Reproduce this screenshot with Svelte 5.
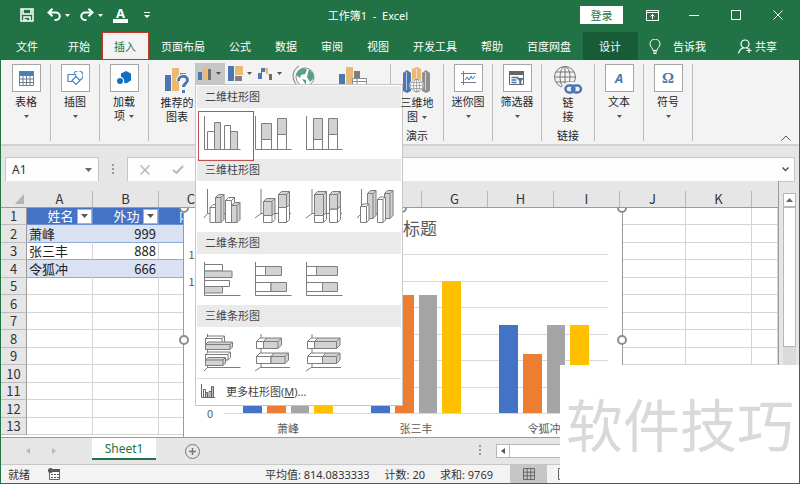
<script>
  const tabs = ['文件', '开始', '插入', '页面布局', '公式', '数据', '审阅', '视图', '开发工具', '帮助', '百度网盘', '设计'];
  const columns = ['A', 'B', 'C', 'D', 'E', 'F', 'G', 'H', 'I', 'J', 'K', ''];
  const people = [
    ['萧峰', 999],
    ['张三丰', 888],
    ['令狐冲', 666],
  ];
  const emptyRows = [5, 6, 7, 8, 9, 10, 11, 12, 13];
  const series = [
    { name: '萧峰', values: [999, 888, 777, 888] },
    { name: '张三丰', values: [888, 888, 888, 999] },
    { name: '令狐冲', values: [666, 444, 666, 666] },
  ];
  const ticks = [1200, 1000, 800, 600, 400, 200, 0];

  const G = '#d2d2d2';
  const W = '#ffffff';
  // Flat icons list rectangles as [x, y, width, height, fill];
  // solid icons add the depth of the box as a last number.
  const gallery = [
    {
      title: '二维柱形图',
      items: [
        { name: '簇状柱形图', axis: 'M7.5 8V41.5H43.5', flat: [[10.5, 23.5, 7, 18, W], [17.5, 14.5, 6, 27, G], [27.5, 17.5, 6, 24, W], [33.5, 23.5, 7, 18, G]] },
        { name: '堆积柱形图', axis: 'M7.5 8V41.5H43.5', flat: [[13.5, 15.5, 10, 16, G], [13.5, 31.5, 10, 10, W], [29.5, 10.5, 9, 16, G], [29.5, 26.5, 9, 15, W]] },
        { name: '百分比堆积柱形图', axis: 'M7.5 8V41.5H43.5', flat: [[14.5, 10.5, 9, 21, G], [14.5, 31.5, 9, 10, W], [29.5, 10.5, 9, 16, G], [29.5, 26.5, 9, 15, W]] },
      ],
    },
    {
      title: '三维柱形图',
      items: [
        { name: '三维簇状柱形图', axis: 'M10.5 8V32.5L7 37M10.5 32.5H43', solid: [[13, 26.5, 5.5, 15, W, 3], [18.5, 16.5, 5.5, 25, G, 3], [28.5, 19.5, 6, 22, W, 3], [34.5, 24.5, 5.5, 17, G, 3]] },
        { name: '三维堆积柱形图', axis: 'M13 8V32.5L7 37M13 32.5H43', solid: [[15.5, 34.5, 8.5, 7, W, 3], [15.5, 20.5, 8.5, 14, G, 3], [30.5, 26.5, 8, 15, W, 3], [30.5, 13.5, 8, 13, G, 3]] },
        { name: '三维百分比堆积柱形图', axis: 'M13 8V32.5L7 37M13 32.5H43', solid: [[15.5, 34.5, 9, 7, W, 3], [15.5, 13.5, 9, 21, G, 3], [30.5, 28, 8, 13.5, W, 3], [30.5, 13.5, 8, 14.5, G, 3]] },
        { name: '三维柱形图', axis: 'M11.5 8V32.5L7 37M11.5 32.5H43', solid: [[17.5, 12.5, 5.5, 25, G, 3], [10.5, 25.5, 6, 16, W, 2.5], [34.5, 12.5, 5.5, 25, G, 3], [27.5, 18.5, 5.5, 23, W, 2.5]] },
      ],
    },
    {
      title: '二维条形图',
      items: [
        { name: '簇状条形图', axis: 'M7.5 8V41.5H43.5', flat: [[7.5, 10.5, 18, 6.5, W], [7.5, 17, 27.5, 6.5, G], [7.5, 26.5, 25, 6, W], [7.5, 32.5, 18, 6.5, G]] },
        { name: '堆积条形图', axis: 'M7.5 8V41.5H43.5', flat: [[7.5, 12.5, 10, 9, W], [17.5, 12.5, 16, 9, G], [7.5, 28.5, 15.5, 9, W], [23, 28.5, 15.5, 9, G]] },
        { name: '百分比堆积条形图', axis: 'M7.5 8V41.5H43.5', flat: [[7.5, 12.5, 10, 9, W], [17.5, 12.5, 21, 9, G], [7.5, 28.5, 16, 9, W], [23.5, 28.5, 15, 9, G]] },
      ],
    },
    {
      title: '三维条形图',
      items: [
        { name: '三维簇状条形图', axis: 'M10.5 7V40.5H43.5M11 40L7 44', solid: [[8.5, 11.5, 16.5, 6, W, 2.5], [8.5, 17.5, 24.5, 5, G, 2.5], [8.5, 27.5, 22.5, 5.5, W, 2.5], [8.5, 33, 17.5, 5.5, G, 2.5]] },
        { name: '三维堆积条形图', axis: 'M13 7V40.5H42M13 40L7 44', solid: [[8.5, 14.5, 7, 7, W, 3.5], [15.5, 14.5, 14.5, 7, G, 3.5], [8.5, 29.5, 14.5, 7, W, 3.5], [23, 29.5, 14, 7, G, 3.5]] },
        { name: '三维百分比堆积条形图', axis: 'M13 7V40.5H42M13 40L7 44', solid: [[8.5, 14.5, 7, 7, W, 3.5], [15.5, 14.5, 22, 7, G, 3.5], [8.5, 29.5, 15, 7, W, 3.5], [23.5, 29.5, 14, 7, G, 3.5]] },
      ],
    },
  ];
</script>

{#snippet caret(cls = '')}
  <svg class="caret {cls}" width="5" height="3" viewBox="0 0 5 3"><path d="M0 0h5L2.500 3z" fill="currentColor" /></svg>
{/snippet}

{#snippet galleryIcon(item)}
  <svg width="51" height="51" viewBox="0 0 51 51" fill="none" stroke="#7d7d7d" stroke-width="1" stroke-linejoin="round">
    <path d={item.axis} />
    {#each item.flat ?? [] as [x, y, w, h, fill]}
      <rect {x} {y} width={w} height={h} {fill} />
    {/each}
    {#each item.solid ?? [] as [x, y, w, h, fill, d]}
      <path d="M{x} {y}l{d} {-d}h{w}v{h}l{-d} {d}z" {fill} />
      <path d="M{x} {y}h{w}v{h}h{-w}zM{x + w} {y}l{d} {-d}" {fill} />
    {/each}
  </svg>
{/snippet}

{#snippet globe()}
  <g fill="none" stroke="#777" stroke-width="1">
    <circle cx="11" cy="11" r="10.500" /><ellipse cx="11" cy="11" rx="5" ry="10.500" />
    <path d="M11 .5v21M.5 11h21M2 6h18M2 16h18" />
  </g>
{/snippet}

<div class="app">
  <header class="titlebar">
    <div class="quick">
      <button aria-label="保存"><svg width="14" height="14" viewBox="0 0 14 14" fill="none" stroke="#fff" stroke-width="1.500"><path d="M1 1h12v12H1zM3 1v5h8V1M4 13V9h6v4" /><path d="M6 11v2" /></svg></button>
      <button class="undo" aria-label="撤消"><svg width="14" height="14" viewBox="0 0 14 14" fill="none" stroke="#fff" stroke-width="2"><path d="M1.500 4.500H9a3.700 3.700 0 0 1 0 7.500H7.500M5.500.7L1.500 4.500l4 3.800" /></svg></button>
      <button class="drop" aria-label="撤消列表">{@render caret()}</button>
      <button class="redo" aria-label="恢复"><svg width="14" height="14" viewBox="0 0 14 14" fill="none" stroke="#fff" stroke-width="2"><path d="M12.500 4.500H5a3.700 3.700 0 0 0 0 7.500h1.500M8.500.7l4 3.800-4 3.800" /></svg></button>
      <button class="drop" aria-label="恢复列表">{@render caret()}</button>
      <button class="fontcolor" aria-label="字体颜色"><b>A</b></button>
      <button aria-label="自定义快速访问工具栏"><svg width="6" height="7" viewBox="0 0 6 7" fill="#fff"><path d="M0 0h6v1H0zM0 3h6L3 6z" /></svg></button>
    </div>
    <h1>工作簿1&nbsp; -&nbsp; Excel</h1>
    <div class="window">
      <button class="login">登录</button>
      <button class="win" aria-label="功能区显示选项"><svg width="13" height="11" viewBox="0 0 13 11" fill="none" stroke="#fff"><path d="M.5.5h12v10H.5zM.5 2.500h12M6.500 9V4.500M4.500 6.500l2-2 2 2" /></svg></button>
      <button class="win" aria-label="最小化"><svg width="10" height="10" viewBox="0 0 10 10" stroke="#fff"><path d="M0 5.500h10" /></svg></button>
      <button class="win" aria-label="最大化"><svg width="10" height="10" viewBox="0 0 10 10" fill="none" stroke="#fff"><path d="M.5.5h9v9h-9z" /></svg></button>
      <button class="win" aria-label="关闭"><svg width="10" height="10" viewBox="0 0 10 10" stroke="#fff"><path d="M.5.5l9 9M9.500.5l-9 9" /></svg></button>
    </div>
  </header>

  <nav class="tabs">
    {#each tabs as tab}
      <button class="tab" class:file={tab === '文件'} class:active={tab === '插入'} class:context={tab === '设计'}>{tab}</button>
    {/each}
    <button class="tell">
      <svg width="12" height="15" viewBox="0 0 12 15" fill="none" stroke="#fff"><path d="M4 11.500C4 9 1 8 1 5a5 5 0 0 1 10 0c0 3-3 4-3 6.500zM4 13h4M4.500 14.500h3" /></svg>
      告诉我
    </button>
    <button class="share">
      <svg width="14" height="15" viewBox="0 0 14 15" fill="none" stroke="#fff" stroke-width="1.200"><circle cx="7" cy="5" r="4" /><path d="M.6 14.500C1 11.500 3 9.500 5.500 8.800M8.500 8.700l1.500.8M11 9v5M8.500 11.500h5" /></svg>
      共享
    </button>
  </nav>

  <section class="ribbon">
    <div class="group">
      <button class="cmd"><span class="tile"><svg width="15" height="15" viewBox="0 0 15 15"><path fill="#4a7ebb" d="M0 0h15v4H0z" /><path fill="none" stroke="#6f7d8c" d="M.5.5h14v14H.5zM.5 4.500h14M.5 8h14M.5 11.500h14M4 4v11M7.500 4v11M11 4v11" /></svg></span>表格{@render caret('below')}</button>
    </div>
    <div class="group">
      <button class="cmd"><span class="tile"><svg width="16" height="15" viewBox="0 0 16 15" fill="#fff" stroke="#4a86c0" stroke-width="1.200"><path fill="none" d="M7 2.500a4.800 4.800 0 1 1 6 6.500" /><path d="M1 3.500h7.500v7H1z" /><path d="M9 5.500l4 4-4 4-4-4z" /></svg></span>插图{@render caret('below')}</button>
    </div>
    <div class="group">
      <button class="cmd"><span class="tile"><svg width="16" height="16" viewBox="0 0 16 16" fill="#1071c4"><path d="M10 1l5 2.500v7L10 13.500 5 11V3.500z" /><circle cx="4" cy="11" r="4.200" fill="#fff" /><circle cx="4" cy="11" r="3" /></svg></span>加载<span>项 {@render caret()}</span></button>
    </div>
    <div class="group charts">
      <button class="cmd big">
        <svg width="26" height="29" viewBox="0 0 26 29"><path fill="#4a78b5" d="M1 9h6v16H1z" /><path fill="#eab974" d="M8 2h7v23H8z" /><path fill="#7f7f7f" d="M16 7h6v3h-6z" /><path d="M14.500 15c0-6 9-6 9-1 0 3.500-4 3.500-4 7.500M19.500 24v3" fill="none" stroke="#fff" stroke-width="5" /><path d="M14.500 15c0-6 9-6 9-1 0 3.500-4 3.500-4 7M19.500 24v3" fill="none" stroke="#4a78b5" stroke-width="3" /></svg>
        推荐的<span>图表</span>
      </button>
      <div class="picker">
        <button class="mini open" aria-label="插入柱形图或条形图" aria-expanded="true"><svg width="14" height="14" viewBox="0 0 14 14"><path fill="#4a78b5" d="M0 5h4v8H0z" /><path fill="#eab974" d="M5 0h4v13H5z" /><path fill="#6f6f6f" d="M10 2h3v11h-3z" /></svg>{@render caret()}</button>
        <button class="mini" aria-label="插入层次结构图表"><svg width="15" height="15" viewBox="0 0 15 15"><path fill="#4a78b5" d="M0 0h6v15H0z" /><path fill="#eab974" d="M7 0h8v9H7z" /><path fill="#7f7f7f" d="M7 10h7v5H7z" /></svg>{@render caret()}</button>
        <button class="mini" aria-label="插入瀑布图"><svg width="15" height="14" viewBox="0 0 15 14"><path fill="#4a78b5" d="M0 6h4v6H0z" /><path fill="none" stroke="#4a78b5" d="M3.500 6.500v-5H8" /><path fill="#4a78b5" d="M4 1h3v4H4z" /><path fill="#eab974" d="M7 1h3v7h3v-1H8z" /><path fill="#6f6f6f" d="M11 7h3v6h-3z" /></svg>{@render caret()}</button>

        <div class="menu" role="menu">
          {#each gallery as part}
            <h2>{part.title}</h2>
            <div class="items">
              {#each part.items as item}
                <button role="menuitem" aria-label={item.name}>{@render galleryIcon(item)}</button>
              {/each}
            </div>
          {/each}
          <button class="more" role="menuitem">
            <svg width="16" height="15" viewBox="0 0 16 15" fill="#fff" stroke="#666"><path fill="none" d="M1.500 0v13.500H15" /><path d="M3.500 5.500h2v8h-2zM9 7.500h2v6H9z" /><path fill="#bbb" d="M5.500 8.500h2v5h-2zM11.500 2.500h2v11h-2z" /></svg>
            <span>更多柱形图(<u>M</u>)...</span>
          </button>
          <span class="pick"></span>
        </div>
      </div>
      <svg class="maps" width="24" height="24" viewBox="0 0 24 24"><circle cx="13" cy="12" r="9" fill="#fff" stroke="#8c8c8c" /><path fill="#58a283" d="M7 5l5-2 3 2-2 4-4 1-1 3-4-3zM17 4l4 4 1 5-4 4-3-5 1-4zM10 14l4 1v5z" /><path fill="none" stroke="#777" d="M7 1C0 5-1 14 5 20" /></svg>
      <svg class="pivot" width="30" height="26" viewBox="0 0 30 26"><path fill="#4a78b5" d="M1 9h6v16H1z" /><path fill="#eab974" d="M8 2h7v23H8z" /><path fill="#7f7f7f" d="M16 6h6v8h-6z" /><path fill="#fff" stroke="#8c8c8c" d="M14.500 13.500h14v10h-14zM14.500 16.500h14M19 14v9" /></svg>
    </div>
    <div class="group map">
      <button class="cmd big">
        <svg width="28" height="29" viewBox="0 0 28 29"><path fill="#4a78b5" d="M0 7l4-3 4 3v18l-4 2-4-2z" /><path fill="#eab974" d="M9 3l5-2 4 2v20H9z" /><path fill="#8f8f8f" d="M19 7l4-3 4 3v18l-4 2-4-2z" /><path stroke="#fff" d="M3.500 6v18M13.500 3v9M22.500 6v18" opacity=".6" /><circle cx="13.500" cy="19.500" r="7" fill="#fff" /><g transform="translate(7 13) scale(.6)">{@render globe()}</g></svg>
        三维地<span>图 {@render caret()}</span>
      </button>
      <span class="caption">演示</span>
    </div>
    <div class="group">
      <button class="cmd"><span class="tile"><svg width="15" height="14" viewBox="0 0 15 14" fill="none" stroke="#6f7d8c"><path d="M2.500 0v14M0 2.500h15M0 11.500h15" /><path stroke="#4a78b5" d="M4 9l2-3 2 3 2-4 1.500 3L14 5" /></svg></span>迷你图{@render caret('below')}</button>
    </div>
    <div class="group">
      <button class="cmd"><span class="tile"><svg width="16" height="15" viewBox="0 0 16 15"><path fill="#fff" stroke="#666" d="M.5.5h14v13H.5z" /><path fill="#666" d="M0 0h15v4H0z" /><path stroke="#4a78b5" stroke-width="1.500" d="M2.500 6.500h7M2.500 9h5M2.500 11.500h5" /><path fill="#5a6f85" d="M7.500 7H15l-2.700 3v4h-2v-4z" /></svg></span>筛选器{@render caret('below')}</button>
    </div>
    <div class="group link">
      <button class="cmd big">
        <svg width="29" height="29" viewBox="0 0 29 29">{@render globe()}<path d="M11 23.500a4 4 0 0 1 4-4h5a4 4 0 0 1 4 4" stroke="#f3f3f3" stroke-width="7" fill="none" /><g fill="none" stroke="#4a78b5" stroke-width="2.500"><rect x="11.500" y="19.500" width="9" height="7" rx="3.500" /><rect x="18" y="19.500" width="9" height="7" rx="3.500" /></g></svg>
        链<span>接</span>
      </button>
      <span class="caption">链接</span>
    </div>
    <div class="group">
      <button class="cmd"><span class="tile letter"><i>A</i></span>文本{@render caret('below')}</button>
    </div>
    <div class="group">
      <button class="cmd"><span class="tile letter">Ω</span>符号{@render caret('below')}</button>
    </div>
    <button class="collapse" aria-label="折叠功能区"><svg width="10" height="6" viewBox="0 0 10 6" fill="none" stroke="#555"><path d="M.5 5.500L5 1l4.500 4.500" /></svg></button>
  </section>

  <section class="formula">
    <div class="namebox">
      <input aria-label="名称框" value="A1" />
      <button aria-label="名称列表"><svg width="7" height="4" viewBox="0 0 7 4"><path d="M0 0h7L3.500 4z" fill="#666" /></svg></button>
    </div>
    <span class="grip"></span>
    <div class="edit">
      <button aria-label="取消"><svg width="10" height="10" viewBox="0 0 10 10" stroke="#b8b8b8" stroke-width="1.500"><path d="M.5.5l9 9M9.500.5l-9 9" /></svg></button>
      <button aria-label="输入"><svg width="12" height="9" viewBox="0 0 12 9" fill="none" stroke="#b8b8b8" stroke-width="2"><path d="M1 5l3.500 3L11 1" /></svg></button>
    </div>
    <div class="entry">
      <input aria-label="编辑栏" value="" />
      <button aria-label="展开编辑栏"><svg width="7" height="5" viewBox="0 0 7 5" fill="none" stroke="#555" stroke-width="1.500"><path d="M.5.5l3 3 3-3" /></svg></button>
    </div>
  </section>

  <main class="sheet">
    <div class="cells">
      <table>
        <colgroup>
          <col class="c-num" />
          {#each columns as c}<col class={c === 'C' ? 'c-narrow' : c ? 'c-std' : ''} />{/each}
        </colgroup>
        <thead>
          <tr>
            <th class="corner"><svg width="9" height="10" viewBox="0 0 9 10"><path d="M9 0v10H0z" fill="#b4b4b4" /></svg></th>
            {#each columns as c}<th><span>{c}</span></th>{/each}
          </tr>
        </thead>
        <tbody>
          <tr class="head">
            <th>1</th>
            {#each ['姓名', '外功', '内功'] as label}
              <td><div><span>{label}</span><button aria-label="筛选{label}"><svg width="7" height="4" viewBox="0 0 7 4"><path d="M0 0h7L3.500 4z" fill="#555" /></svg></button></div></td>
            {/each}
            {#each columns.slice(3) as _}<td></td>{/each}
          </tr>
          {#each people as [name, value], i}
            <tr class="data" class:band={i % 2 === 0}>
              <th>{i + 2}</th>
              <td>{name}</td>
              <td class="num">{value}</td>
              {#each columns.slice(2) as _}<td></td>{/each}
            </tr>
          {/each}
          {#each emptyRows as n}
            <tr><th>{n}</th>{#each columns as _}<td></td>{/each}</tr>
          {/each}
        </tbody>
      </table>

      <div class="layer">
        <figure class="chart">
          <figcaption>图表标题</figcaption>
          <div class="plot">
            <div class="lines">
              {#each ticks as t}<div class="line"><span>{t}</span></div>{/each}
            </div>
            <div class="groups">
              {#each series as s}
                <div class="bars">
                  {#each s.values as v}<i style="height: {(v / 1200) * 100}%"></i>{/each}
                </div>
              {/each}
            </div>
          </div>
          <div class="names">
            {#each series as s}<span>{s.name}</span>{/each}
          </div>
          <b class="dot tl"></b><b class="dot tc"></b><b class="dot tr"></b><b class="dot ml"></b><b class="dot mr"></b>
        </figure>
      </div>
    </div>
    <div class="scroll">
      <button aria-label="向上滚动"><svg width="7" height="4" viewBox="0 0 7 4"><path d="M0 4h7L3.500 0z" fill="#666" /></svg></button>
      <div class="track"><div class="thumb"></div></div>
    </div>
  </main>

  <footer>
    <div class="sheets">
      <div class="arrows">
        <svg width="4" height="6" viewBox="0 0 4 6"><path d="M4 0v6L0 3z" fill="#b8b8b8" /></svg>
        <svg width="4" height="6" viewBox="0 0 4 6"><path d="M0 0v6l4-3z" fill="#b8b8b8" /></svg>
      </div>
      <button class="sheettab">Sheet1</button>
      <button class="add" aria-label="新工作表"><svg width="15" height="15" viewBox="0 0 15 15" fill="none" stroke="#777"><circle cx="7.500" cy="7.500" r="7" /><path d="M7.500 4v7M4 7.500h7" stroke-width="1.500" /></svg></button>
      <span class="grip"></span>
      <button class="left" aria-label="向左滚动"><svg width="4" height="6" viewBox="0 0 4 6"><path d="M4 0v6L0 3z" fill="#555" /></svg></button>
      <div class="htrack"></div>
    </div>
    <div class="status">
      <span>就绪</span>
      <svg class="macro" width="13" height="12" viewBox="0 0 13 12"><path fill="#fff" stroke="#666" d="M1.500 3.500h10v8h-10z" /><path fill="#555" d="M5 1h7v3H5zM3 6h2v1H3zM6 6h2v1H6zM9 6h2v1H9zM3 9h2v1H3zM6 9h2v1H6zM9 9h2v1H9z" /><circle cx="2.500" cy="2.500" r="2.500" fill="#555" /></svg>
      <span class="avg">平均值: 814.0833333</span>
      <span>计数: 20</span>
      <span>求和: 9769</span>
      <button class="view" aria-label="普通视图"><svg width="12" height="12" viewBox="0 0 12 12" fill="none" stroke="#666"><path d="M.5.5h11v11H.5zM.5 4.200h11M.5 7.800h11M4.200.5v11M7.800.5v11" /></svg></button>
      <button class="page" aria-label="页面布局视图"><svg width="12" height="12" viewBox="0 0 12 12" fill="none" stroke="#666"><path d="M.5.5h11v11H.5zM3 3.500h6v8H3z" /></svg></button>
    </div>
  </footer>

  <div class="watermark">软件技巧</div>
</div>

<style>
  :global(body) { margin: 0; }
  .app, .app * { box-sizing: border-box; }
  .app {
    position: relative;
    display: flex;
    flex-direction: column;
    min-height: 100vh;
    overflow: hidden;
    border: 1px solid #217346;
    border-top: 0;
    background: #e6e6e6;
    color: #333;
    font: 11px/15px "Noto Sans", "Noto Sans CJK SC", sans-serif;
  }
  button, input { margin: 0; padding: 0; border: 0; background: none; color: inherit; font: inherit; }
  input { min-width: 0; flex: 1; outline: 0; }
  svg { display: block; flex: none; }
  h1, h2, figure { margin: 0; font: inherit; }

  .titlebar { display: grid; grid-template-columns: 1fr auto 1fr; align-items: center; height: 30px; background: #217346; color: #fff; }
  .titlebar h1 { padding-right: 64px; }
  .quick { display: flex; align-items: center; padding-left: 19px; }
  .undo { margin-left: 13px; }
  .redo { margin-left: 10px; }
  .drop { margin-left: 4px; }
  .fontcolor { width: 15px; height: 16px; margin: 0 16px 0 10px; border-bottom: 4px solid #fff; }
  .fontcolor b { display: block; font-size: 13px; line-height: 10px; }
  .window { display: flex; align-items: center; justify-content: flex-end; }
  .login { width: 43px; height: 18px; margin-right: 8px; background: #fff; color: #217346; }
  .win { display: flex; justify-content: center; width: 42px; }

  .tabs { display: flex; align-items: flex-end; height: 30px; background: #217346; color: #fff; }
  .tabs button { display: flex; align-items: center; height: 28px; white-space: nowrap; }
  .tab { padding: 0 12px; }
  .tabs .file { padding: 0 18px 0 15px; }
  .tabs .active { width: 47px; background: #f3f3f3; color: #217346; outline: 1px solid #c0392b; outline-offset: -1px; }
  .tabs .context { padding: 0 17px 0 16px; background: #185c37; }
  .tell { gap: 12px; margin-left: 11px; }
  .share { gap: 3px; margin: 0 22px 0 auto; }

  .ribbon { position: relative; z-index: 3; display: flex; height: 86px; padding: 4px 0 3px 1px; background: #f3f3f3; border-bottom: 2px solid #d2d2d2; }
  .group { position: relative; display: flex; flex-direction: column; align-items: center; width: 49px; border-right: 1px solid #bcbcbc; color: #262626; }
  .group.charts { flex-direction: row; align-items: flex-start; width: 242px; padding-left: 10px; }
  .group.map, .group.link { width: 53px; }
  .cmd { display: flex; flex-direction: column; align-items: center; white-space: nowrap; line-height: 14px; }
  .cmd span { display: flex; align-items: center; gap: 4px; }
  .cmd .tile { justify-content: center; width: 29px; height: 28px; margin-bottom: 3px; border: 1px solid #a6a6a6; background: #fff; }
  .tile.letter { color: #4a78b5; font: bold 15px/15px "Liberation Serif", serif; }
  .tile.letter i { font-family: "Noto Sans", sans-serif; font-size: 13px; }
  .big svg:first-child { margin: 2px 0 1px; }
  .big { width: 36px; }
  .caret { color: #555; }
  .quick .caret { color: #fff; }
  .caret.below { margin-top: 6px; }
  .caption { margin-top: 5px; line-height: 14px; }
  .picker { position: relative; display: flex; margin-top: -1px; }
  .mini { display: flex; align-items: center; gap: 4px; width: 30px; height: 21px; padding-left: 3px; }
  .mini.open { background: #c6c6c6; }
  .maps { margin: 1px 0 0 7px; }
  .pivot { margin: 1px 0 0 22px; }
  .collapse { align-self: flex-end; margin: 0 8px 0 auto; }

  .menu { position: absolute; top: 21px; left: 0; width: 208px; padding: 1px; border: 1px solid #c6c6c6; background: #fff; color: #444; }
  .menu h2 { height: 22px; padding-left: 8px; background: #eaeaea; line-height: 22px; }
  .items { display: flex; height: 51px; }
  .more { display: flex; align-items: center; gap: 10px; width: 100%; height: 26px; padding-left: 3px; border-top: 1px solid #d9d9d9; }
  .pick { position: absolute; top: 26px; left: 2px; width: 56px; height: 50px; border: 1px solid #c0504d; }

  .formula { display: flex; align-items: flex-start; height: 35px; padding: 11px 4px 0; }
  .namebox, .edit, .entry { display: flex; align-items: center; height: 25px; border: 1px solid #c6c6c6; background: #fdfdfd; }
  .namebox { width: 94px; padding: 0 6px; font-size: 12px; }
  .grip { width: 2px; height: 11px; margin: 7px 13px 0; background: repeating-linear-gradient(#999 0 2px, transparent 2px 4px); }
  .edit { width: 84px; padding-left: 12px; gap: 22px; }
  .entry { flex: 1; padding: 0 5px; border-left: 0; }

  .sheet { display: flex; flex: 1; min-height: 200px; font: 13px/16px "Noto Sans CJK SC", sans-serif; }
  .cells { position: relative; flex: 1; min-width: 0; overflow: hidden; border-right: 1px solid #9b9b9b; background: #fff; }
  table { width: 100%; table-layout: fixed; border-collapse: separate; border-spacing: 0; }
  .c-num { width: 26px; }
  .c-std { width: 66px; }
  .c-narrow { width: 65px; }
  th { padding: 0; font-weight: 400; background: #e6e6e6; }
  thead th { height: 27px; border-bottom: 1px solid #9b9b9b; vertical-align: bottom; }
  thead th span { display: block; height: 16px; border-right: 1px solid #b8b8b8; line-height: 16px; }
  thead th:last-child span { border: 0; }
  .corner svg { margin: 0 0 3px 14px; }
  tbody tr { height: 17px; }
  tbody tr:nth-child(even) { height: 18px; }
  tbody th { border-right: 1px solid #9b9b9b; border-bottom: 1px solid #bdbdbd; line-height: 16px; }
  td { padding: 0 2px; border-right: 1px solid #d4d4d4; border-bottom: 1px solid #d4d4d4; line-height: 16px; white-space: nowrap; }
  .num { text-align: right; }
  .head td:nth-child(-n + 4) { padding: 0; background: #4472c4; border-color: #6d92d3; color: #fff; }
  .head div { display: flex; align-items: center; height: 16px; }
  .head div span { flex: 1; padding-left: 17px; text-align: center; }
  .head button { display: flex; align-items: center; justify-content: center; width: 15px; height: 15px; border: 1px solid #b0b0b0; background: #fff; }
  .data td:nth-child(-n + 4) { border-bottom-color: #8ea9db; color: #222; }
  .band td:nth-child(-n + 4) { background: #d9e1f2; border-right-color: #d9e1f2; }

  .layer { position: absolute; inset: 27px 0 0 0; overflow: hidden; }
  .chart { position: absolute; top: 0; left: 182px; width: 440px; height: 264px; padding: 9px 14px 0 40px; border: 1px solid #9b9b9b; border-top: 0; background: #fff; color: #595959; font-size: 11px; }
  figcaption { margin-left: -26px; text-align: center; font-size: 17px; line-height: 22px; }
  .plot { position: relative; height: 159px; margin-top: 15px; }
  .lines { display: flex; flex-direction: column; justify-content: space-between; height: 160px; }
  .line { position: relative; height: 1px; background: #d9d9d9; }
  .line span { position: absolute; top: -8px; right: 100%; margin-right: 11px; font-size: 11px; line-height: 16px; }
  .groups { position: absolute; inset: 0; display: flex; }
  .bars { display: flex; flex: 1; align-items: flex-end; gap: 5px; padding: 0 19px; }
  .bars i { flex: 1; background: #4472c4; }
  .bars i:nth-child(2) { background: #ed7d31; }
  .bars i:nth-child(3) { background: #a5a5a5; }
  .bars i:nth-child(4) { background: #ffc000; }
  .names { display: flex; margin-top: 7px; }
  .names span { flex: 1; text-align: center; }
  .dot { position: absolute; width: 10px; height: 10px; border: 2px solid #8c8c8c; border-radius: 50%; background: #fff; }
  .tl, .tc, .tr { top: -5px; }
  .tl, .ml { left: -5px; }
  .tr, .mr { right: -5px; }
  .tc { left: 213px; }
  .ml, .mr { top: 127px; }

  .scroll { display: flex; flex-direction: column; width: 20px; padding: 12px 3px 0 4px; }
  .scroll button { display: flex; align-items: center; justify-content: center; height: 14px; border: 1px solid #b8b8b8; background: #fff; }
  .track { flex: 1; background: #dadada; }
  .thumb { height: 61%; border: 1px solid #b8b8b8; background: #fff; }

  .sheets { display: flex; height: 27px; border-top: 1px solid #9b9b9b; }
  .arrows { display: flex; align-items: center; gap: 22px; width: 91px; padding-left: 25px; }
  .sheettab { width: 64px; height: 22px; border-bottom: 2px solid #217346; background: #fff; color: #217346; font-size: 12px; }
  .add { margin-left: 29px; }
  .sheets .grip { margin: 7px 15px 0 auto; }
  .left { display: flex; align-items: center; justify-content: center; width: 14px; height: 14px; margin-top: 6px; border: 1px solid #b8b8b8; background: #fff; }
  .htrack { width: 273px; height: 14px; margin: 6px 16px 0 0; border: 1px solid #b8b8b8; border-left: 0; background: #fff; }
  .status { display: flex; align-items: center; gap: 15px; height: 19px; padding-left: 7px; border-top: 1px solid #c6c6c6; background: #f3f3f3; white-space: nowrap; }
  .macro { margin-left: 3px; }
  .avg { margin-left: auto; }
  .view { display: flex; align-items: center; justify-content: center; width: 37px; height: 18px; margin-left: 2px; background: #c6c6c6; }
  .page { margin-right: 229px; margin-left: -4px; }

  .watermark { position: absolute; z-index: 4; right: -1px; bottom: -1px; width: 240px; height: 119px; background: #fff; color: #d9d9d9; text-align: center; font: 57px/114px "Noto Sans CJK SC", sans-serif; }
</style>
